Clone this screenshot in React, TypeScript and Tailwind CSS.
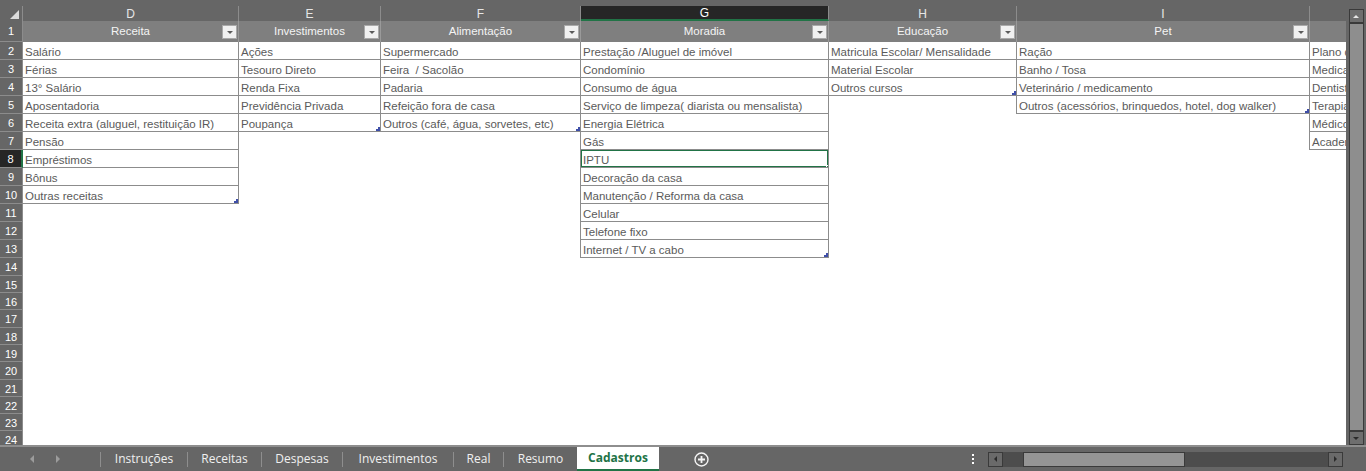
import React from 'react';

type Col = { letter: string; w: string; title: string; items: string[] };

const COLS: Col[] = [
  {
    letter: 'D',
    w: 'w-[216px]',
    title: 'Receita',
    items: ['Salário', 'Férias', '13° Salário', 'Aposentadoria', 'Receita extra (aluguel, restituição IR)', 'Pensão', 'Empréstimos', 'Bônus', 'Outras receitas'],
  },
  { letter: 'E', w: 'w-[142px]', title: 'Investimentos', items: ['Ações', 'Tesouro Direto', 'Renda Fixa', 'Previdência Privada', 'Poupança'] },
  {
    letter: 'F',
    w: 'w-[200px]',
    title: 'Alimentação',
    items: ['Supermercado', 'Feira  / Sacolão', 'Padaria', 'Refeição fora de casa', 'Outros (café, água, sorvetes, etc)'],
  },
  {
    letter: 'G',
    w: 'w-[248px]',
    title: 'Moradia',
    items: [
      'Prestação /Aluguel de imóvel',
      'Condomínio',
      'Consumo de água',
      'Serviço de limpeza( diarista ou mensalista)',
      'Energia Elétrica',
      'Gás',
      'IPTU',
      'Decoração da casa',
      'Manutenção / Reforma da casa',
      'Celular',
      'Telefone fixo',
      'Internet / TV a cabo',
    ],
  },
  { letter: 'H', w: 'w-[188px]', title: 'Educação', items: ['Matricula Escolar/ Mensalidade', 'Material Escolar', 'Outros cursos'] },
  {
    letter: 'I',
    w: 'w-[293px]',
    title: 'Pet',
    items: ['Ração', 'Banho / Tosa', 'Veterinário / medicamento', 'Outros (acessórios, brinquedos, hotel, dog walker)'],
  },
  // J is cut by the scrollbar, only its first letters show
  { letter: '', w: 'w-[190px]', title: '', items: ['Plano de saúde', 'Medicamentos', 'Dentista', 'Terapia', 'Médico', 'Academia'] },
];

// heights of rows 2..24
const ROW_H = [
  'h-[18px]', 'h-[18px]', 'h-[18px]', 'h-[18px]', 'h-[18px]', 'h-[18px]',
  'h-[18px]', 'h-[18px]', 'h-[18px]', 'h-[18px]', 'h-[18px]', 'h-[18px]',
  'h-[18px]', 'h-[17px]', 'h-[17px]', 'h-[18px]', 'h-[17px]', 'h-[17px]',
  'h-[18px]', 'h-[17px]', 'h-[17px]', 'h-[17px]', 'h-[17px]',
];

const SEL_ROW = 8;
const SEL_COL = 3; // G

const inTable = (ci: number, r: number) => ci >= 0 && r - 2 < COLS[ci].items.length;

function FilterBtn() {
  return (
    <span className="absolute right-[1px] top-[4px] flex h-[14px] w-[15px] items-center justify-center border border-[#a9a9a9] bg-[#f0f0f0]">
      <span className="h-0 w-0 border-x-[3px] border-t-[3px] border-x-transparent border-t-[#5a5a5a]" />
    </span>
  );
}

function Cell({ ci, r }: { ci: number; r: number }) {
  const col = COLS[ci];
  const on = inTable(ci, r);
  const last = r - 2 === col.items.length - 1;
  const needLeft = on && ci > 0 && !inTable(ci - 1, r);
  const selected = r === SEL_ROW && ci === SEL_COL;

  return (
    <div
      className={`relative flex h-full shrink-0 items-center overflow-hidden whitespace-pre px-[2px] pt-[4px] ${col.w} ${
        on ? 'border-r border-b border-[#8c8c8c]' : ''
      } ${needLeft ? 'shadow-[-1px_0_0_#8c8c8c]' : ''}`}
    >
      {on ? col.items[r - 2] : ''}
      {on && last && ci < 6 && (
        <span className="absolute bottom-0 right-0 h-[4px] w-[4px] border-r-2 border-b-2 border-[#3f4fa8]" />
      )}
      {selected && (
        <>
          <span className="absolute inset-x-[-1px] top-[-1px] bottom-[-1px] border-2 border-[#217346]" />
          <span className="absolute bottom-[-3px] right-[-3px] h-[5px] w-[5px] border border-white bg-[#217346]" />
        </>
      )}
    </div>
  );
}

function SheetTab({ label, w }: { label: string; w: string }) {
  return (
    <div className={`flex h-full items-center ${w}`}>
      <span className="h-[15px] w-px bg-[#8e8e8e]" />
      <span className="flex-1 text-center">{label}</span>
    </div>
  );
}

export default function App() {
  const rows = Array.from({ length: 23 }, (_, i) => i + 2);

  return (
    <div className="flex h-[471px] w-[1366px] flex-col overflow-hidden bg-[#666666] font-['Liberation_Sans',Arial,sans-serif]">
      {/* sheet */}
      <div className="flex h-[445px] shrink-0">
        <div className="flex w-[1346px] flex-col overflow-hidden pt-[6px]">
          {/* column letters */}
          <div className="flex h-[15px] shrink-0 text-[12px] text-[#e6e6e6]">
            <div className="relative w-[23px] shrink-0 border-r border-[#8c8c8c]">
              <span className="absolute bottom-[2px] right-[3px] h-[9px] w-[9px] bg-[#dcdcdc] [clip-path:polygon(100%_0,100%_100%,0_100%)]" />
            </div>
            {COLS.map((c, ci) => (
              <div
                key={ci}
                className={`flex shrink-0 items-center justify-center border-r border-[#8c8c8c] ${c.w} ${
                  ci === SEL_COL ? 'border-b-2 border-b-[#217346] bg-[#262626] text-white' : ''
                }`}
              >
                {c.letter}
              </div>
            ))}
          </div>

          {/* row 1 - table headers */}
          <div className="flex h-[21px] shrink-0 text-[11.5px] text-[#f4f4f4]">
            <div className="flex w-[23px] shrink-0 items-center justify-center border-r border-b border-[#8c8c8c] pt-[1px] text-[11px] text-white">
              1
            </div>
            {COLS.map((c, ci) => (
              <div key={ci} className={`relative flex shrink-0 items-center justify-center border-r border-[#9a9a9a] bg-[#7f7f7f] ${c.w}`}>
                {c.title}
                {ci < 6 && <FilterBtn />}
              </div>
            ))}
          </div>

          {/* rows 2..24 */}
          <div className="flex-1 bg-white text-[11.5px] text-[#5a5a5a]">
            {rows.map((r, i) => (
              <div key={r} className={`flex shrink-0 ${ROW_H[i]}`}>
                <div
                  className={`flex h-full w-[23px] shrink-0 items-center justify-center border-b border-[#8c8c8c] pt-[2px] text-[11px] text-white ${
                    r === SEL_ROW ? 'border-r-2 border-r-[#217346] bg-[#262626]' : 'border-r bg-[#666666]'
                  }`}
                >
                  {r}
                </div>
                {COLS.map((c, ci) => (
                  <Cell key={ci} ci={ci} r={r} />
                ))}
              </div>
            ))}
          </div>
        </div>

        {/* vertical scrollbar */}
        <div className="flex w-[20px] shrink-0 flex-col items-center pt-[9px]">
          <div className="flex h-[14px] w-[15px] items-center justify-center border border-[#3a3a3a] bg-[#6e6e6e]">
            <span className="h-0 w-0 border-x-[3px] border-b-[3px] border-x-transparent border-b-[#e8e8e8]" />
          </div>
          <div className="w-[15px] flex-1 border border-[#3a3a3a] bg-[#8e8e8e]" />
          <div className="flex h-[14px] w-[15px] items-center justify-center border border-[#3a3a3a] bg-[#6e6e6e]">
            <span className="h-0 w-0 border-x-[3px] border-t-[3px] border-x-transparent border-t-[#2a2a2a]" />
          </div>
        </div>
      </div>

      {/* sheet tabs */}
      <div className="flex h-[26px] shrink-0 items-center border-t-2 border-[#8e8e8e] font-['Open_Sans',sans-serif] text-[12px] text-[#f0f0f0]">
        <div className="flex h-full w-[100px] shrink-0 items-center pl-[30px]">
          <span className="h-0 w-0 border-y-[4px] border-r-[4px] border-y-transparent border-r-[#9c9c9c]" />
          <span className="ml-[22px] h-0 w-0 border-y-[4px] border-l-[4px] border-y-transparent border-l-[#9c9c9c]" />
        </div>
        <SheetTab label="Instruções" w="w-[87px]" />
        <SheetTab label="Receitas" w="w-[74px]" />
        <SheetTab label="Despesas" w="w-[81px]" />
        <SheetTab label="Investimentos" w="w-[111px]" />
        <SheetTab label="Real" w="w-[50px]" />
        <SheetTab label="Resumo" w="w-[74px]" />
        <div className="flex h-full w-[82px] shrink-0 items-center justify-center border-b-2 border-[#217346] bg-white font-bold text-[#217346]">
          Cadastros
        </div>
        <svg className="ml-[35px] shrink-0" width="15" height="15" viewBox="0 0 15 15">
          <circle cx="7.5" cy="7.5" r="6.5" fill="none" stroke="#f5f5f5" strokeWidth="1.4" />
          <path d="M7.5 4v7M4 7.5h7" stroke="#f5f5f5" strokeWidth="1.8" />
        </svg>
        <div className="ml-[263px] flex shrink-0 flex-col gap-[2px]">
          <span className="h-[2px] w-[2px] bg-white" />
          <span className="h-[2px] w-[2px] bg-white" />
          <span className="h-[2px] w-[2px] bg-white" />
        </div>
        {/* horizontal scrollbar */}
        <div className="ml-[14px] flex h-[15px] w-[355px] shrink-0 bg-[#4d4d4d]">
          <div className="flex w-[15px] items-center justify-center border border-[#3a3a3a] bg-[#6a6a6a]">
            <span className="h-0 w-0 border-y-[3px] border-r-[3px] border-y-transparent border-r-[#2a2a2a]" />
          </div>
          <div className="ml-[20px] w-[162px] border border-[#3a3a3a] bg-[#959595]" />
          <div className="flex-1" />
          <div className="flex w-[15px] items-center justify-center border border-[#3a3a3a] bg-[#6a6a6a]">
            <span className="h-0 w-0 border-y-[3px] border-l-[3px] border-y-transparent border-l-[#2a2a2a]" />
          </div>
        </div>
      </div>
    </div>
  );
}
